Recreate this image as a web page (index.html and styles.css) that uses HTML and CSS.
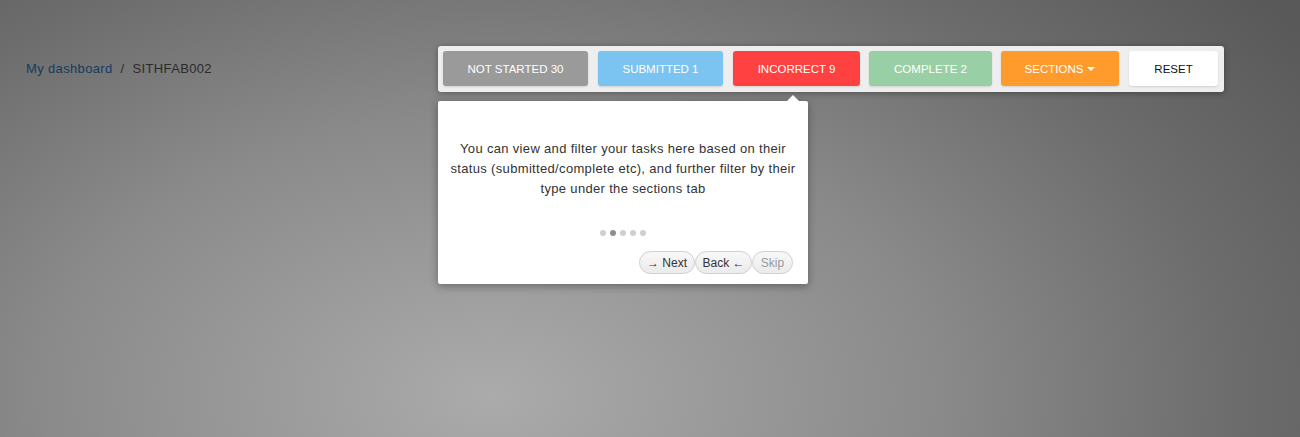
FILE: index.html
```html
<!DOCTYPE html>
<html lang="en">
<head>
<meta charset="utf-8">
<title>Dashboard</title>
<link rel="stylesheet" href="styles.css">
</head>
<body>
<div class="page">
  <header class="topbar">
    <nav class="crumbs">
      <a class="crumb-link" href="#">My dashboard</a>
      <span class="crumb-sep">/</span>
      <span class="crumb-current">SITHFAB002</span>
    </nav>
    <div class="filters-wrap">
      <div class="filters">
        <button class="fbtn fbtn-grey">NOT STARTED 30</button>
        <button class="fbtn fbtn-blue">SUBMITTED 1</button>
        <button class="fbtn fbtn-red">INCORRECT 9</button>
        <button class="fbtn fbtn-green">COMPLETE 2</button>
        <button class="fbtn fbtn-orange">SECTIONS <span class="caret"></span></button>
        <button class="fbtn fbtn-white">RESET</button>
      </div>
      <div class="tour">
        <span class="tour-arrow"></span>
        <p class="tour-text">You can view and filter your tasks here based on their status (submitted/complete etc), and further filter by their type under the sections tab</p>
        <div class="tour-dots">
          <span class="dot"></span>
          <span class="dot dot-active"></span>
          <span class="dot"></span>
          <span class="dot"></span>
          <span class="dot"></span>
        </div>
        <div class="tour-actions">
          <button class="tbtn tbtn-next">&rarr; Next</button>
          <button class="tbtn tbtn-back">Back &larr;</button>
          <button class="tbtn tbtn-muted">Skip</button>
        </div>
      </div>
    </div>
  </header>
</div>
</body>
</html>
```

FILE: styles.css
```css
html, body {
  margin: 0;
  height: 100%;
}
body {
  font-family: "Liberation Sans", Arial, Helvetica, sans-serif;
  background: radial-gradient(ellipse 1000px 620px at 490px 395px, #ababab 0%, #8a8a8a 45%, #6c6c6c 75%, #595959 100%);
  background-color: #5c5c5c;
  overflow: hidden;
}
.page {
  height: 100%;
}
.topbar {
  display: flex;
  align-items: center;
  justify-content: space-between;
  padding: 46px 76px 0 26px;
}
.crumbs {
  font-size: 13px;
  letter-spacing: 0.35px;
  display: flex;
  gap: 8px;
  color: #2b2b2b;
  margin-top: -1px;
}
.crumb-link {
  color: #163a5e;
  text-decoration: none;
}
.crumb-sep {
  color: #2b2b2b;
}
.filters-wrap {
  position: relative;
}
.filters {
  display: flex;
  gap: 10px;
  padding: 5px 6px 6px 5px;
  background: #eeeeee;
  border-radius: 3px;
  box-shadow: 0 1px 6px rgba(0, 0, 0, 0.35);
}
.fbtn {
  height: 35px;
  border: 0;
  border-radius: 3px;
  font-family: "Liberation Sans", Arial, Helvetica, sans-serif;
  font-size: 11.5px;
  color: #fff;
  padding: 0;
  display: flex;
  align-items: center;
  justify-content: center;
  gap: 4px;
  box-shadow: 0 1px 2px rgba(0, 0, 0, 0.12);
}
.fbtn-grey { background: #9a9a9a; width: 145px; }
.fbtn-blue { background: #7bc3f0; width: 125px; }
.fbtn-red { background: #ff4141; width: 127px; }
.fbtn-green { background: #99cfa4; width: 123px; margin-left: -1px; }
.fbtn-orange { background: #ff9a2d; width: 118px; margin-left: -1px; }
.fbtn-white { background: #ffffff; color: #111; width: 89px; }
.caret {
  width: 0;
  height: 0;
  border-left: 4px solid transparent;
  border-right: 4px solid transparent;
  border-top: 4px solid #fff;
  margin-top: 1px;
}
.tour {
  position: absolute;
  left: 0;
  top: 55px;
  width: 370px;
  height: 183px;
  box-sizing: border-box;
  background: #fff;
  border-radius: 2px;
  box-shadow: 0 2px 8px rgba(0, 0, 0, 0.35);
  padding: 38px 10px 0;
  display: flex;
  flex-direction: column;
  align-items: center;
}
.tour-arrow {
  position: absolute;
  top: -6px;
  left: 349px;
  width: 0;
  height: 0;
  border-left: 6px solid transparent;
  border-right: 6px solid transparent;
  border-bottom: 6px solid #fff;
}
.tour-text {
  margin: 0;
  font-size: 13px;
  letter-spacing: 0.33px;
  line-height: 20px;
  color: #333;
  text-align: center;
}
.tour-dots {
  display: flex;
  gap: 4px;
  margin-top: 31px;
}
.dot {
  width: 6px;
  height: 6px;
  border-radius: 50%;
  background: #cfcfcf;
}
.dot-active {
  background: #8e8e8e;
}
.tour-actions {
  align-self: flex-end;
  display: flex;
  margin-top: 15px;
  margin-right: 5px;
}
.tbtn {
  height: 23px;
  box-sizing: border-box;
  padding: 0;
  border: 1px solid #cfcfcf;
  border-radius: 12px;
  background: linear-gradient(#f8f8f8, #ebebeb);
  font-family: "Liberation Sans", Arial, Helvetica, sans-serif;
  font-size: 12px;
  color: #333;
  text-align: center;
}
.tbtn-next { width: 56px; }
.tbtn-back { width: 57px; }
.tbtn-muted {
  width: 41px;
  color: #999;
}
```
